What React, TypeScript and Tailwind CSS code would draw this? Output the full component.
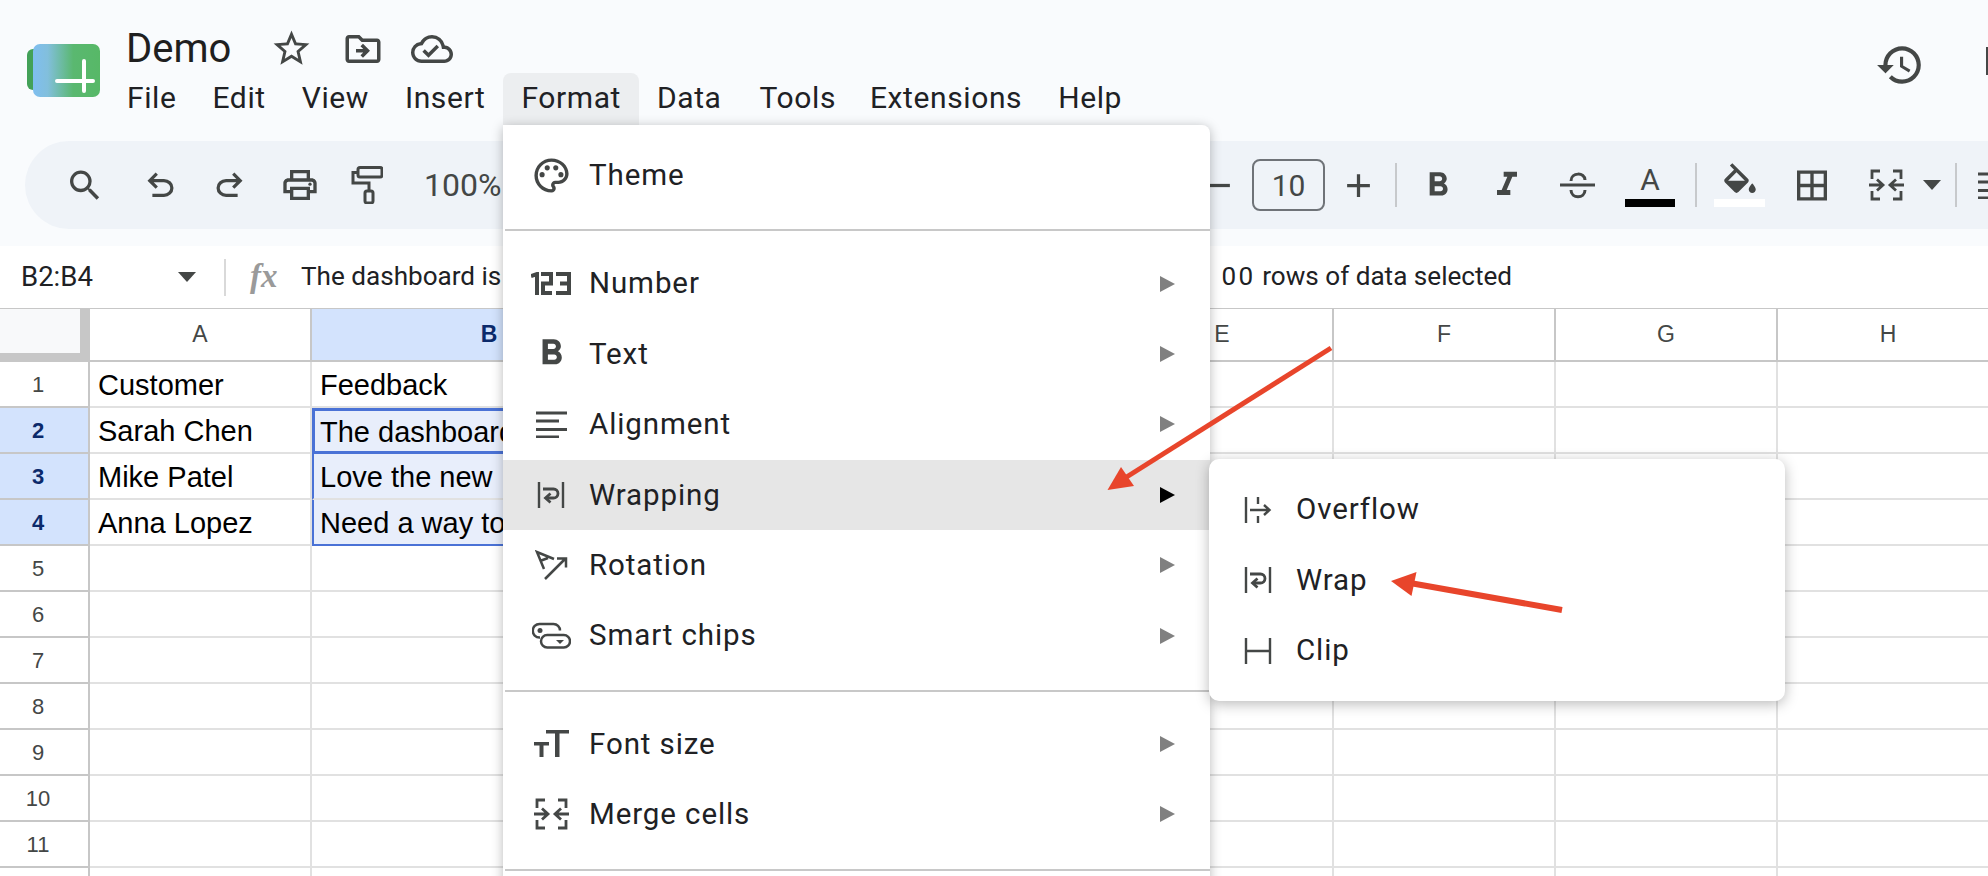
import { ReactNode } from 'react'
import {
  MdAdd,
  MdBorderAll,
  MdFormatBold,
  MdFormatItalic,
  MdHistory,
  MdOutlineCloudDone,
  MdOutlineDriveFileMove,
  MdOutlinePalette,
  MdOutlinePrint,
  MdRemove,
  MdSearch,
  MdStarBorder,
} from 'react-icons/md'

const roboto = "font-['Roboto',sans-serif]"
const arial = "font-['Liberation_Sans',Arial,sans-serif]"

function Slot({ className, children }: { className: string; children: ReactNode }) {
  return <span className={`flex h-[40px] w-[40px] shrink-0 items-center justify-center ${className}`}>{children}</span>
}

function Logo() {
  return (
    <svg width="73" height="53" viewBox="0 0 73 53" className="shrink-0">
      <defs>
        <linearGradient id="logoFill" x1="0" x2="1" y1="0" y2="0">
          <stop offset="0" stopColor="#7fbef0" />
          <stop offset="0.22" stopColor="#82bfdc" />
          <stop offset="0.6" stopColor="#5ab870" />
          <stop offset="1" stopColor="#57b867" />
        </linearGradient>
      </defs>
      <rect x="0" y="5" width="20" height="41" rx="6" fill="#43a158" />
      <rect x="6" y="0" width="67" height="53" rx="7" fill="url(#logoFill)" />
      <path d="M30 37h36M57 17v30" stroke="#fff" strokeWidth="4" strokeLinecap="round" fill="none" />
    </svg>
  )
}

function UndoIcon({ flip }: { flip?: boolean }) {
  return (
    <svg width="39" height="39" viewBox="0 -960 960 960" fill="currentColor" className={`shrink-0 ${flip ? '-scale-x-100' : ''}`}>
      <path d="M280-200v-80h284q63 0 109.5-40T720-420q0-60-46.5-100T564-560H312l104 104-56 56-200-200 200-200 56 56-104 104h252q97 0 166.5 63T800-420q0 94-69.5 157T564-200H280Z" />
    </svg>
  )
}

function PaintIcon() {
  return (
    <svg width="32" height="38" viewBox="0 0 32 38" fill="none" stroke="#444746" strokeWidth="3" className="shrink-0">
      <rect x="7" y="1.500" width="24" height="9.500" rx="2" />
      <path d="M7 6.500H2v10.500h16v8" />
      <rect x="14" y="25" width="8" height="12" rx="2" />
    </svg>
  )
}

function StrikeIcon() {
  return (
    <svg width="35" height="28" viewBox="0 0 35 28" fill="none" stroke="#444746" strokeWidth="3" className="shrink-0">
      <path d="M0 14h35" />
      <path d="M11 10C11 1 25 1 25 9" />
      <path d="M11 19C11 28 25 28 25 19" />
    </svg>
  )
}

function FillIcon() {
  return (
    <svg width="42" height="30" viewBox="0 0 24 17" fill="#444746" className="shrink-0">
      <path d="M16.560 8.940L7.620 0 6.210 1.410l2.380 2.380-5.150 5.150c-.59.59-.59 1.540 0 2.120l5.500 5.500c.29.29.68.44 1.060.44s.77-.15 1.060-.44l5.500-5.500c.59-.58.59-1.530 0-2.120zM5.210 10L10 5.210 14.790 10H5.210zM19 11.500s-2 2.170-2 3.500c0 1.100.9 2 2 2s2-.9 2-2c0-1.330-2-3.500-2-3.500z" />
    </svg>
  )
}

function NumberIcon() {
  return (
    <svg width="40" height="23" viewBox="0 0 40 23" fill="none" stroke="#444746" strokeWidth="4" className="shrink-0">
      <path d="M0 4L6 2v21" />
      <path d="M10 2h10v9.500H12V21h9" />
      <path d="M25 2h13v19H25M29 11.500h9" />
    </svg>
  )
}

function FontSizeIcon() {
  return (
    <svg width="36" height="27" viewBox="0 0 36 27" fill="#444746" className="shrink-0">
      <path d="M1 12h15v3.500h-5.500V27h-4V15.500H1z" />
      <path d="M13 0h23v3.500h-9.500V27H22V3.500h-9z" />
    </svg>
  )
}

function WrapIcon() {
  return (
    <svg width="28" height="28" viewBox="0 0 28 28" fill="none" stroke="#444746" strokeWidth="2.400" className="shrink-0">
      <path d="M2 1v26M26 1v26" />
      <path d="M6 8h10.500a4.500 4.500 0 0 1 0 9H9" strokeWidth="2.800" />
      <path d="M13.500 12.500L8.500 17l5 4.500" strokeWidth="2.800" />
    </svg>
  )
}

function OverflowIcon() {
  return (
    <svg width="28" height="28" viewBox="0 0 28 28" fill="none" stroke="#444746" strokeWidth="2.400" className="shrink-0">
      <path d="M2 1v26" />
      <path d="M14 1v7M14 20v7" />
      <path d="M6 14h19M20 9l5.500 5-5.500 5" />
    </svg>
  )
}

function ClipIcon() {
  return (
    <svg width="28" height="28" viewBox="0 0 28 28" fill="none" stroke="#444746" strokeWidth="2.400" className="shrink-0">
      <path d="M2 1v26M26 1v26M2 14h24" />
    </svg>
  )
}

function AlignIcon() {
  return (
    <svg width="32" height="28" viewBox="0 0 32 28" fill="none" stroke="#444746" strokeWidth="3" className="shrink-0">
      <path d="M1 3h31M1 11h23M1 19.500h31M1 27h23" />
    </svg>
  )
}

function RotationIcon() {
  return (
    <svg width="33" height="30" viewBox="0 0 33 30" fill="none" stroke="#444746" strokeWidth="2.500" className="shrink-0">
      <path d="M10 29L30 9M22 8.500h9v9" />
      <path d="M9 19L2 2l17 7M5 11l8-3" />
    </svg>
  )
}

function ChipsIcon() {
  return (
    <svg width="39" height="27" viewBox="0 0 39 27" fill="none" stroke="#444746" strokeWidth="2.500" className="shrink-0">
      <path d="M8 15.500H7.500a6.500 6.500 0 0 1 0-13.500h14a6.500 6.500 0 0 1 6.500 6.500" />
      <circle cx="8" cy="8.500" r="2.500" fill="#444746" stroke="none" />
      <rect x="9" y="13" width="29" height="12.500" rx="6.200" />
      <path d="M24 18h8l-4 4z" fill="#444746" stroke="none" />
    </svg>
  )
}

function MergeIcon() {
  return (
    <svg width="35" height="32" viewBox="0 0 35 32" fill="none" stroke="#444746" strokeWidth="2.800" className="shrink-0">
      <path d="M11 2H3v8M24 2h8v8M11 30H3v-8M24 30h8v-8" />
      <path d="M0 16h13M8 10.500l6 5.500-6 5.500" />
      <path d="M35 16H22M27 10.500L21 16l6 5.500" />
    </svg>
  )
}

function Caret({ className }: { className: string }) {
  return (
    <svg width="18" height="10" viewBox="0 0 18 10" className={`shrink-0 ${className}`}>
      <path d="M0 0h18L9 10z" fill="#444746" />
    </svg>
  )
}

function Separator({ className }: { className: string }) {
  return <span className={`h-[44px] w-[2px] shrink-0 bg-[#c7c9cc] ${className}`} />
}

function MenuRow({
  icon,
  label,
  active,
  sub,
}: {
  icon: ReactNode
  label: string
  active?: boolean
  sub?: boolean
}) {
  return (
    <div className={`flex h-[70.4px] items-center ${active ? 'bg-[#e6e6e6]' : ''}`}>
      <span className="ml-[10px] flex w-[76px] shrink-0 items-center justify-center">{icon}</span>
      <span className="text-[29.5px] tracking-[0.9px] text-[#202124]">{label}</span>
      {sub && (
        <svg width="15" height="16" viewBox="0 0 15 16" className="absolute left-[657px]">
          <path d="M0 0l15 8-15 8z" fill={active ? '#000' : '#808080'} />
        </svg>
      )}
    </div>
  )
}

function Divider({ className }: { className: string }) {
  return <div className={`ml-[2px] h-[2px] bg-[#c8c8c8] ${className}`} />
}

const columns = ['A', 'B', 'C', 'D', 'E', 'F', 'G', 'H']
const rows = Array.from({ length: 12 }, (_, i) => i + 1)
const sheet: Record<number, [string, string]> = {
  1: ['Customer', 'Feedback'],
  2: ['Sarah Chen', 'The dashboard is slow'],
  3: ['Mike Patel', 'Love the new'],
  4: ['Anna Lopez', 'Need a way to export'],
}

function Grid() {
  return (
    <div className={`grid grid-cols-[90px_222px_356px_222px_222px_222px_222px_222px_222px] grid-rows-[53px] auto-rows-[46px] ${arial}`}>
      <div className="border-r-[10px] border-b-[9px] border-[#c7c7c7] bg-[#f8f9fa]" />
      {columns.map((c) => (
        <div
          key={c}
          className={`flex items-center justify-center border-r-2 border-b-2 border-[#c7c7c7] text-[23px] ${
            c === 'B' ? 'bg-[#d3e3fd] font-bold text-[#0b2a6b]' : 'bg-white text-[#444746]'
          }`}
        >
          {c}
        </div>
      ))}
      {rows.map((r) => {
        const selected = r >= 2 && r <= 4
        return (
          <div key={r} className="contents">
            <div
              className={`flex items-center justify-center border-r-2 border-b-2 border-[#c7c7c7] pr-[12px] text-[22px] ${
                selected ? 'bg-[#d3e3fd] font-bold text-[#0b2a6b]' : 'bg-white text-[#444746]'
              }`}
            >
              {r < 12 ? r : null}
            </div>
            {columns.map((c, i) => {
              let cls = 'border-r-2 border-b-2 border-[#e1e1e1] bg-white pl-[8px]'
              if (c === 'B' && r === 2) cls = 'border-[3px] border-[#4a72d6] bg-[#e8eefb] pl-[5px]'
              if (c === 'B' && r === 3) cls = 'border-l-2 border-b-2 border-l-[#4a72d6] border-b-[#e1e1e1] bg-[#e8eefb] pl-[6px]'
              if (c === 'B' && r === 4) cls = 'border-l-2 border-b-2 border-[#4a72d6] bg-[#e8eefb] pl-[6px]'
              return (
                <div key={c} className={`flex items-center overflow-hidden whitespace-nowrap pt-[4px] text-[29px] text-black ${cls}`}>
                  {i < 2 ? sheet[r]?.[i] : null}
                </div>
              )
            })}
          </div>
        )
      })}
    </div>
  )
}

export default function App() {
  return (
    <div className={`relative h-[876px] w-[1988px] overflow-hidden bg-white ${roboto}`}>
      <header className="flex h-[141px] bg-[#f9fbfd] pl-[27px] pt-[44px]">
        <Logo />
        <div className="-mt-[44px] ml-[9px]">
          <div className="flex h-[73px] items-center pl-[17px] pt-[24px]">
            <span className="text-[40px] text-[#1f1f1f]">Demo</span>
            <span className="ml-[39px] flex items-center text-[#444746]">
              <MdStarBorder size={43} />
              <MdOutlineDriveFileMove size={42} className="ml-[29px]" />
              <MdOutlineCloudDone size={42} className="ml-[27px]" />
            </span>
          </div>
          <nav className="flex h-[52px] items-center text-[30px] tracking-[0.6px] text-[#202124]">
            <span className="flex h-[52px] items-center px-[18px] pb-[4px]">File</span>
            <span className="flex h-[52px] items-center px-[18px] pb-[4px]">Edit</span>
            <span className="flex h-[52px] items-center px-[18px] pb-[4px]">View</span>
            <span className="flex h-[52px] items-center px-[18px] pb-[4px]">Insert</span>
            <span className="flex h-[52px] items-center rounded-t-lg bg-[#eceef0] px-[18px] pb-[4px]">Format</span>
            <span className="flex h-[52px] items-center pl-[18px] pr-[20px] pb-[4px]">Data</span>
            <span className="flex h-[52px] items-center pl-[18px] pr-[16px] pb-[4px]">Tools</span>
            <span className="flex h-[52px] items-center px-[18px] pb-[4px]">Extensions</span>
            <span className="flex h-[52px] items-center px-[18px] pb-[4px]">Help</span>
          </nav>
        </div>
        <div className="ml-auto flex items-start">
          <MdHistory size={50} className="-mt-[4px] text-[#444746]" />
          <span className="ml-[61px] mt-[3px] h-[28px] w-[2px] bg-[#444746]" />
        </div>
      </header>

      <div className="h-[105px] bg-[#f9fbfd] pl-[25px]">
        <div className="flex h-[88px] items-center rounded-l-[44px] bg-[#eff3f8] text-[#444746]">
          <Slot className="ml-[40px]"><MdSearch size={41} /></Slot>
          <Slot className="ml-[35px]"><UndoIcon /></Slot>
          <Slot className="ml-[29px]"><UndoIcon flip /></Slot>
          <Slot className="ml-[31px]"><MdOutlinePrint size={42} /></Slot>
          <Slot className="ml-[27px]"><PaintIcon /></Slot>
          <span className="ml-[37px] w-[80px] shrink-0 whitespace-nowrap text-[32px]">100%</span>
          <Slot className="ml-[694px]"><MdRemove size={39} /></Slot>
          <span className="ml-[14px] flex h-[52px] w-[73px] shrink-0 items-center justify-center rounded-lg border-2 border-[#6f7378] text-[30px]">10</span>
          <Slot className="ml-[13px]"><MdAdd size={39} /></Slot>
          <Separator className="ml-[17px]" />
          <Slot className="ml-[21px]"><MdFormatBold size={41} /></Slot>
          <Slot className="ml-[29px]"><MdFormatItalic size={44} /></Slot>
          <Slot className="ml-[30px]"><StrikeIcon /></Slot>
          <span className="ml-[28px] flex w-[50px] shrink-0 flex-col items-center">
            <span className="h-[34px] text-[30px] leading-[34px]">A</span>
            <span className="mt-[2px] h-[8px] w-[50px] bg-black" />
          </span>
          <Separator className="ml-[20px]" />
          <span className="ml-[17px] flex w-[51px] shrink-0 flex-col items-center">
            <FillIcon />
            <span className="mt-[6px] h-[8px] w-[51px] bg-white" />
          </span>
          <Slot className="ml-[27px]"><MdBorderAll size={41} /></Slot>
          <Slot className="ml-[34px]"><MergeIcon /></Slot>
          <Caret className="ml-[17px]" />
          <Separator className="ml-[14px]" />
          <Slot className="ml-[16px]"><AlignIcon /></Slot>
        </div>
      </div>

      <div className="flex h-[62px] items-center bg-white text-[26.1px] text-[#202124]">
        <span className="ml-[21px] w-[157px] text-[27.5px]">B2:B4</span>
        <Caret className="" />
        <span className="ml-[28px] h-[37px] w-[2px] bg-[#d9d9d9]" />
        <span className="ml-[24px] w-[51px] font-['Liberation_Serif',serif] text-[33px] font-bold italic text-[#9a9a9a]">fx</span>
        <span className="whitespace-nowrap">
          The dashboard is slow to load whenever I scroll the page down with more than <span className="-ml-[14px] mr-[8px]">1</span><span className="tracking-[2.500px]">00</span> rows of data selected
        </span>
      </div>
      <div className="h-[1px] bg-[#c7c7c7]" />

      <Grid />

      {/* format menu */}
      <div className="absolute left-[503px] top-[125px] h-[760px] w-[707px] rounded-tr-lg bg-white pt-[15px] shadow-[0_2px_12px_rgba(0,0,0,0.28)]">
        <MenuRow icon={<MdOutlinePalette size={41} className="text-[#444746]" />} label="Theme" />
        <Divider className="mt-[19px]" />
        <div className="mt-[17px]">
          <MenuRow icon={<NumberIcon />} label="Number" sub />
          <MenuRow icon={<MdFormatBold size={43} className="text-[#444746]" />} label="Text" sub />
          <MenuRow icon={<AlignIcon />} label="Alignment" sub />
          <MenuRow icon={<WrapIcon />} label="Wrapping" sub active />
          <MenuRow icon={<RotationIcon />} label="Rotation" sub />
          <MenuRow icon={<ChipsIcon />} label="Smart chips" sub />
        </div>
        <Divider className="mt-[19px]" />
        <div className="mt-[17px]">
          <MenuRow icon={<FontSizeIcon />} label="Font size" sub />
          <MenuRow icon={<MergeIcon />} label="Merge cells" sub />
        </div>
        <Divider className="mt-[19px]" />
      </div>

      {/* wrapping submenu */}
      <div className="absolute left-[1209px] top-[459px] flex h-[242px] w-[576px] flex-col justify-center rounded-[10px] bg-white shadow-[0_3px_14px_rgba(0,0,0,0.28)]">
        {[
          { label: 'Overflow', icon: <OverflowIcon /> },
          { label: 'Wrap', icon: <WrapIcon /> },
          { label: 'Clip', icon: <ClipIcon /> },
        ].map((item) => (
          <div key={item.label} className="flex h-[70.500px] items-center pl-[35px]">
            {item.icon}
            <span className="ml-[24px] text-[29.5px] tracking-[0.9px] text-[#202124]">{item.label}</span>
          </div>
        ))}
      </div>

      {/* red annotation arrows */}
      <svg className="pointer-events-none absolute left-0 top-0" width="1988" height="876" viewBox="0 0 1988 876">
        <path d="M1331 348L1125 478" stroke="#e8452b" strokeWidth="5" fill="none" />
        <path d="M1107.500 490L1121 467L1134 486z" fill="#e8452b" />
        <path d="M1562 610L1410 583" stroke="#e8452b" strokeWidth="6" fill="none" />
        <path d="M1391 581L1416.500 572L1411.500 596z" fill="#e8452b" />
      </svg>
    </div>
  )
}
